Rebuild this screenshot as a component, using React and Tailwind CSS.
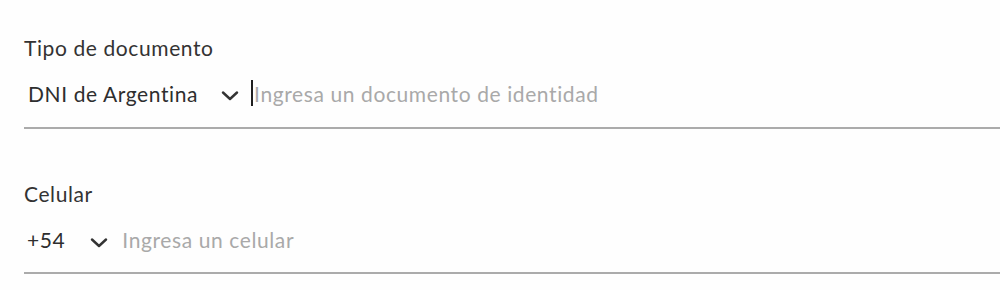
function Chevron() {
  return (
    <svg width="18" height="10" viewBox="0 0 18 10" className="shrink-0 mt-[6px]">
      <polyline
        points="2,1.5 9,8 16,1.5"
        fill="none"
        stroke="#333333"
        strokeWidth="2.4"
        strokeLinecap="round"
        strokeLinejoin="round"
      />
    </svg>
  );
}

function Field({ label, value, placeholder, valueClass, inputClass, focused, rowTop, lineGap, wrap }) {
  return (
    <div className={wrap}>
      <p className="text-[21px] leading-[25px] tracking-[0.6px] text-[#333333]">{label}</p>
      <div className={`${rowTop} ${lineGap} flex items-center border-b-2 border-[#ababab]`}>
        <span className={`text-[21px] leading-[25px] tracking-[0.6px] text-[#2e2e2e] ${valueClass}`}>{value}</span>
        <Chevron />
        <div className={`flex items-center ${inputClass}`}>
          {focused && <span className="w-[2px] h-[26px] bg-[#1f1f1f] mr-[1px]" />}
          <span className="text-[21px] leading-[25px] tracking-[0.6px] text-[#a9a9a9]">{placeholder}</span>
        </div>
      </div>
    </div>
  );
}

export default function App() {
  return (
    <div
      className="w-[1000px] h-[290px] bg-[#fefefe] pl-[24px] pt-[35px]"
      style={{ fontFamily: 'Lato, "Open Sans", sans-serif' }}
    >
      <Field
        label="Tipo de documento"
        value="DNI de Argentina"
        placeholder="Ingresa un documento de identidad"
        valueClass="pl-[4px] mr-[23px]"
        inputClass="ml-[12px]"
        rowTop="mt-[20px]"
        lineGap="pb-[21px]"
        focused
      />
      <Field
        wrap="mt-[52px]"
        label="Celular"
        value="+54"
        placeholder="Ingresa un celular"
        valueClass="pl-[3px] mr-[25px]"
        inputClass="ml-[14px]"
        rowTop="mt-[21px]"
        lineGap="pb-[20px]"
      />
    </div>
  );
}
